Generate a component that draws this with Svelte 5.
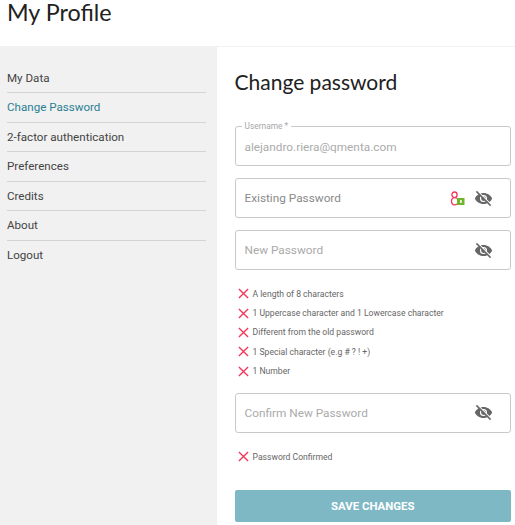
<script>
	const menu = ['My Data', 'Change Password', '2-factor authentication', 'Preferences', 'Credits', 'About', 'Logout'];
	const rules = [
		'A length of 8 characters',
		'1 Uppercase character and 1 Lowercase character',
		'Different from the old password',
		'1 Special character (e.g # ? ! +)',
		'1 Number'
	];
</script>

{#snippet eye()}
	<svg class="eye" viewBox="0 0 24 24" width="19" height="19">
		<path fill="#666" d="M12 5C7 5 2.700 8.100 1 12c1.700 3.900 6 7 11 7s9.300-3.100 11-7c-1.700-3.900-6-7-11-7zm0 11.500a4.500 4.500 0 1 1 0-9 4.500 4.500 0 0 1 0 9z" />
		<circle cx="12" cy="12" r="3" fill="#666" />
		<path stroke="#fff" stroke-width="1.500" d="M4.500 2.500l17 17" />
		<path stroke="#666" stroke-width="1.800" d="M3 3l18 18" />
	</svg>
{/snippet}

{#snippet cross()}
	<svg class="cross" viewBox="0 0 12 12" width="11" height="11">
		<path stroke="#f4385a" stroke-width="1.500" fill="none" d="M1 1l10 10M11 1L1 11" />
	</svg>
{/snippet}

<header><h1>My Profile</h1></header>

<div class="page">
	<nav>
		{#each menu as item, i}
			<div class="item" class:active={i === 1}>{item}</div>
		{/each}
	</nav>

	<main>
		<h2>Change password</h2>

		<fieldset class="field user">
			<legend>Username *</legend>
			<span class="value">alejandro.riera@qmenta.com</span>
		</fieldset>

		<div class="field">
			<span class="existing">Existing Password</span>
			<svg class="lock" viewBox="0 0 15 15" width="15" height="15">
				<path stroke="#f4385a" stroke-width="1.300" fill="none" d="M4.500 1c1.800 0 2.600 1.200 2.600 2.800S6.300 6.600 4.500 6.600 1.900 5.400 1.900 3.800 2.700 1 4.500 1zM7 7.400C6.400 6.800 5.500 6.600 4.500 6.600c-1.900 0-3 1.500-3 3.500s1.100 3.800 3 3.800c1 0 1.900-.3 2.500-.9" />
				<rect x="7" y="7" width="7.500" height="7" fill="#6fb52c" />
				<rect x="10" y="9" width="1.800" height="3" fill="#e8f3dc" />
			</svg>
			{@render eye()}
		</div>

		<div class="field">
			<span class="hint">New Password</span>
			{@render eye()}
		</div>

		<ul class="rules">
			{#each rules as rule}
				<li>{@render cross()}{rule}</li>
			{/each}
		</ul>

		<div class="field">
			<span class="hint">Confirm New Password</span>
			{@render eye()}
		</div>

		<ul class="rules confirmed">
			<li>{@render cross()}Password Confirmed</li>
		</ul>

		<button type="button">SAVE CHANGES</button>
	</main>
</div>

<style>
	:global(body) {
		background: #fff;
		font-family: Roboto, sans-serif;
		overflow: hidden;
	}

	header {
		height: 46px;
		padding-left: 7px;
	}

	h1 {
		margin: 0;
		font-family: Lato, sans-serif;
		font-size: 23.300px;
		font-weight: 400;
		line-height: 24px;
		color: #212121;
	}

	.page {
		display: flex;
		height: 479px;
		border-top: 1px solid #f1f1f1;
		box-sizing: border-box;
	}

	nav {
		width: 217px;
		flex: none;
		box-sizing: border-box;
		padding: 16.500px 11px 0 7px;
		background: #f1f1f1;
	}

	.item {
		height: 29.500px;
		box-sizing: border-box;
		border-bottom: 1px solid #d4d4d4;
		font-size: 11.600px;
		line-height: 28px;
		color: #444;
	}

	.item:last-child {
		border-bottom: none;
	}

	.active {
		color: #2b7f93;
	}

	main {
		flex: 1;
		padding: 0 4px 0 17.500px;
		min-width: 0;
	}

	h2 {
		margin: 21px 0 30px;
		font-family: Lato, sans-serif;
		font-size: 21px;
		font-weight: 400;
		line-height: 28px;
		color: #212121;
	}

	.field {
		display: flex;
		align-items: center;
		height: 40px;
		margin: 0 0 12px;
		padding: 0 17px 0 9px;
		box-sizing: border-box;
		border: 1px solid #c9c9c9;
		border-radius: 3px;
		font-size: 11.800px;
		min-width: 0;
	}

	.user {
		display: block;
		height: 46px;
		margin-top: -6px;
		padding: 0 9px;
	}

	legend {
		margin-left: -3px;
		padding: 0 3px;
		font-size: 8.400px;
		line-height: 13px;
		color: #a8a8a8;
	}

	.value {
		display: block;
		line-height: 29px;
		color: #ababab;
	}

	.existing {
		color: #8a8a8a;
	}

	.hint {
		color: #aaa;
	}

	.lock {
		margin-left: auto;
		margin-right: 9px;
	}

	.eye {
		flex: none;
	}

	.hint + .eye {
		margin-left: auto;
	}

	.rules {
		list-style: none;
		margin: 14px 0 12px;
		padding: 0 0 0 3px;
	}

	.rules li {
		display: flex;
		align-items: center;
		gap: 4px;
		height: 19.400px;
		font-size: 8.600px;
		color: #666;
	}

	.confirmed {
		margin: 14px 0 24px;
	}

	button {
		display: block;
		width: 100%;
		height: 32px;
		padding: 0;
		border: none;
		border-radius: 2px;
		background: #7fb8c5;
		color: #fff;
		font-family: Roboto, sans-serif;
		font-size: 11.400px;
		font-weight: 700;
	}
</style>
